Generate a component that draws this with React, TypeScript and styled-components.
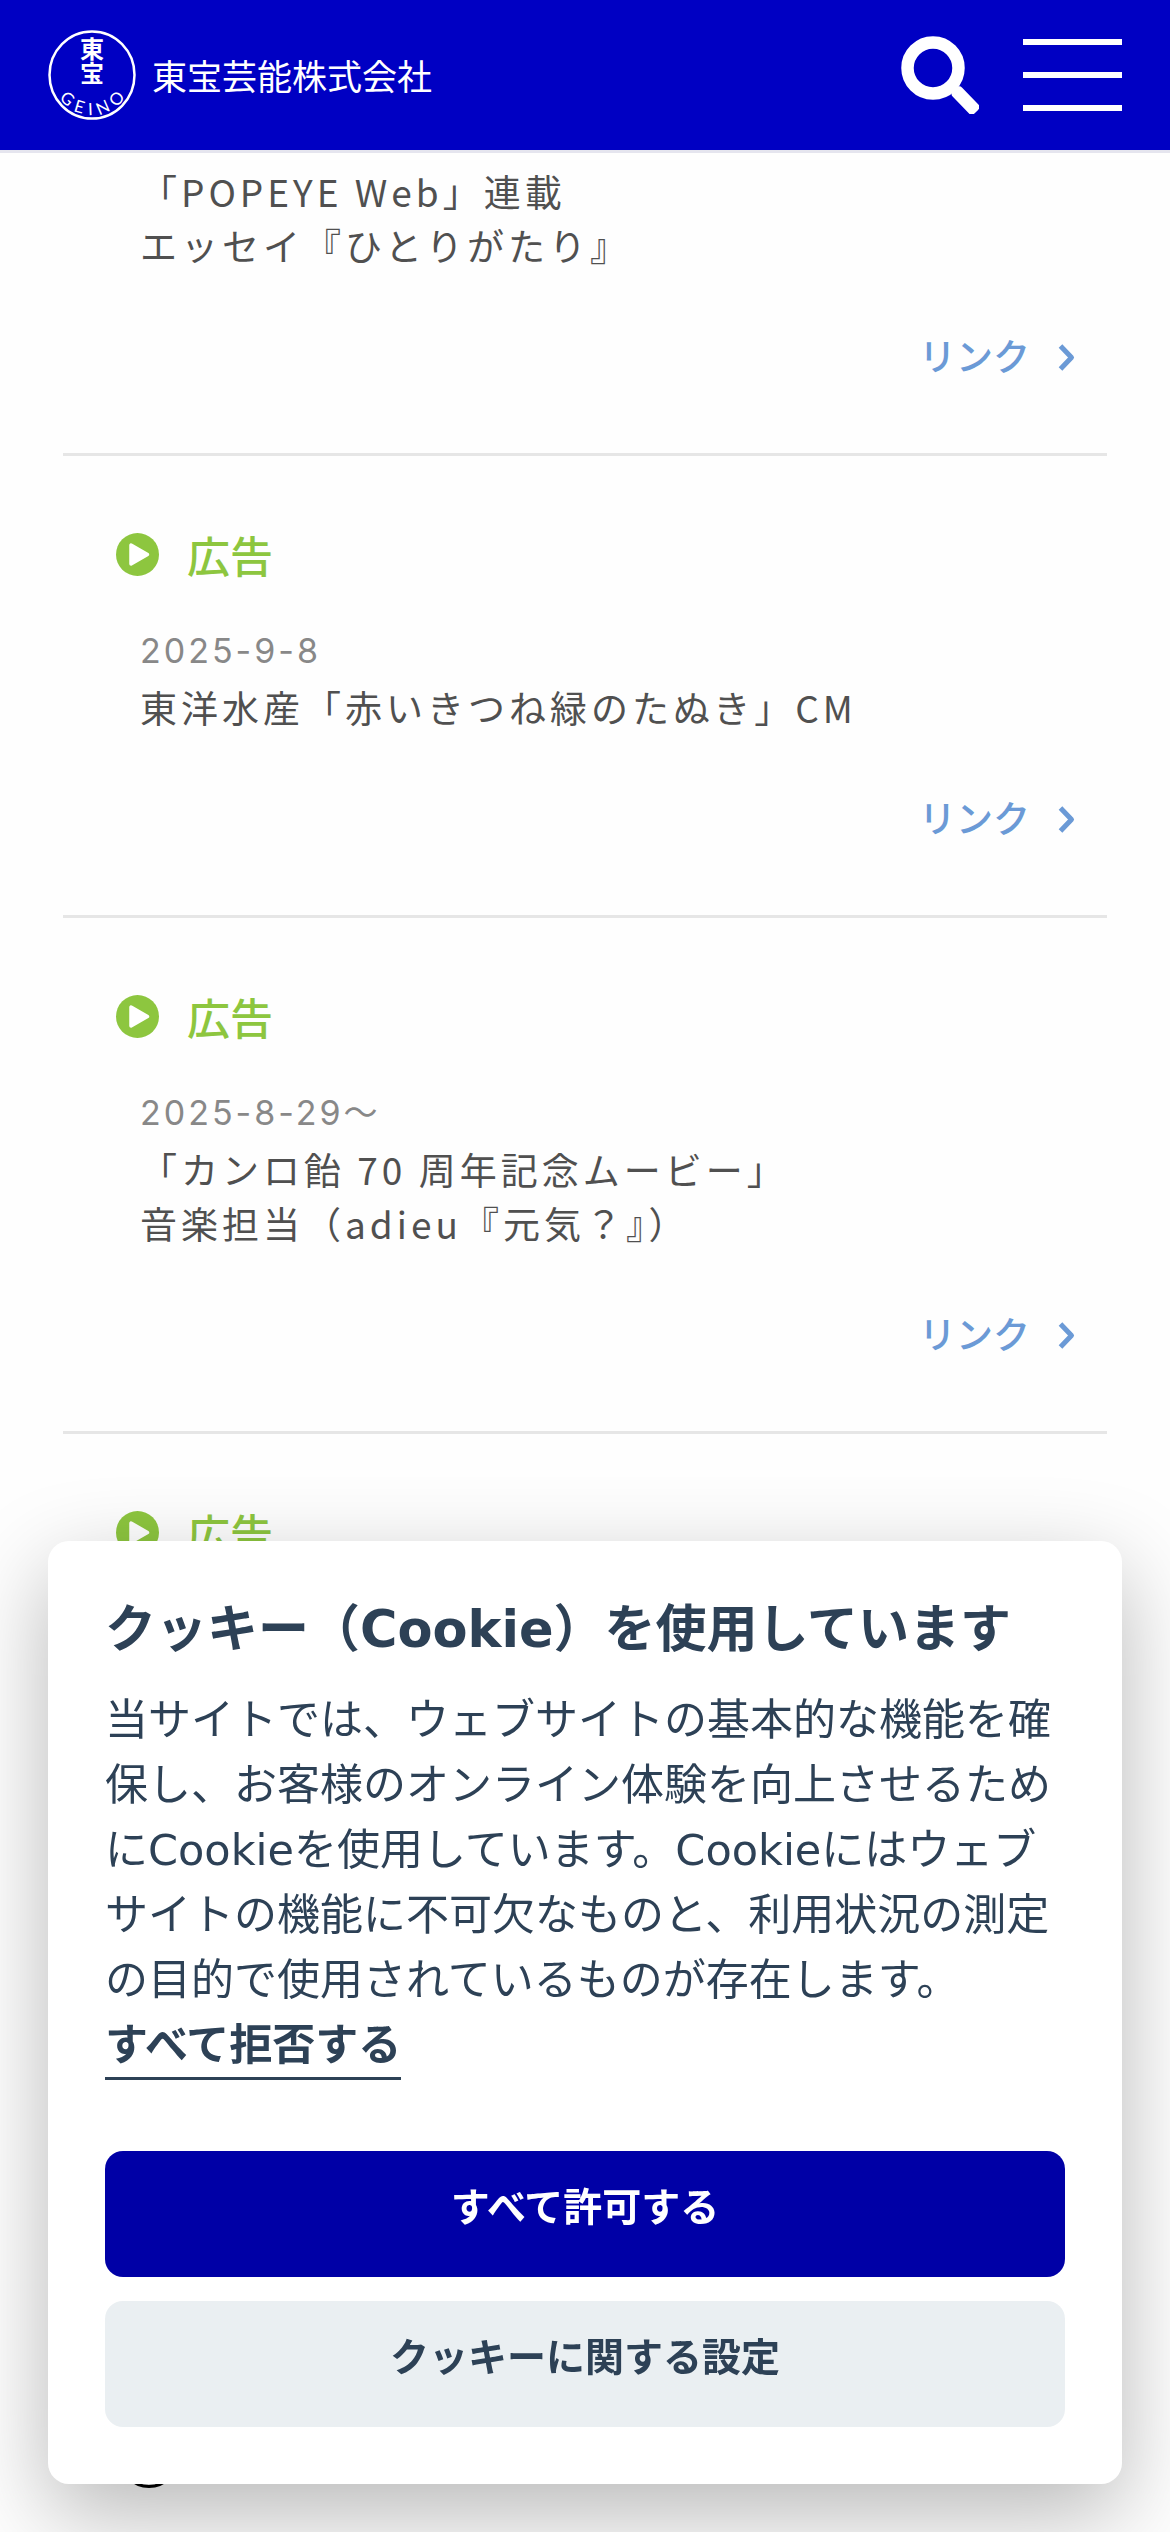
import React from "react";
import styled, { createGlobalStyle } from "styled-components";

const jpSans = `"Noto Sans CJK JP", "Noto Sans", sans-serif`;
const dialogSans = `"DejaVu Sans", "Noto Sans CJK JP", sans-serif`;

const GlobalStyle = createGlobalStyle`
  *, *::before, *::after { box-sizing: border-box; }
  body {
    margin: 0;
    background: #fefefe;
    color: #505050;
    font-family: ${jpSans};
  }
  h2, p, ul { margin: 0; padding: 0; }
  button { border: 0; padding: 0; background: none; cursor: pointer; }
`;

const Page = styled.div`
  display: flex;
  flex-direction: column;
  min-height: 100vh;
`;

const Header = styled.header`
  position: sticky;
  top: 0;
  display: flex;
  align-items: center;
  justify-content: space-between;
  padding: 29px 48px;
  background: #0000c3;
  border-bottom: 3px solid #e5e5ee;
`;

const Brand = styled.a`
  display: flex;
  align-items: center;
  gap: 16px;
  color: #fff;
  font-size: 35px;
  line-height: 54px;
  text-decoration: none;
`;

const HeaderTools = styled.div`
  display: flex;
  align-items: center;
  gap: 44px;
`;

const IconButton = styled.button`
  display: flex;
  color: #fff;
`;

const MenuButton = styled.button`
  display: flex;
  flex-direction: column;
  gap: 27px;
  width: 99px;
`;

const MenuBar = styled.span`
  height: 6px;
  background: #fff;
`;

const WorkList = styled.ul`
  margin: 0 63px;
  list-style: none;
`;

const WorkItem = styled.li`
  padding: 71px 32px 71px 77px;
  border-bottom: 3px solid #e6e6e6;

  &:first-child { padding-top: 11px; }
  &:last-child { border-bottom: 0; padding-bottom: 0; }
`;

const Category = styled.h2`
  display: flex;
  align-items: center;
  gap: 28px;
  margin-left: -24px;
  color: #8dc63f;
  font-size: 43px;
  font-weight: 500;
  line-height: 54px;
`;

const WorkDate = styled.p`
  margin-top: 43px;
  margin-bottom: 2px;
  color: #888;
  font-family: Inter, ${jpSans};
  font-size: 34px;
  font-weight: 400;
  letter-spacing: 3px;
  line-height: 54px;
`;

const WorkText = styled.p`
  font-size: 37px;
  letter-spacing: 4px;
  line-height: 54px;
`;

const LinkRow = styled.div`
  display: flex;
  justify-content: flex-end;
  margin-top: 56px;
`;

const WorkLink = styled.a`
  display: flex;
  align-items: center;
  gap: 28px;
  color: #6b9ad6;
  font-size: 37px;
  font-weight: 500;
  line-height: 54px;
  text-decoration: none;
`;

const PageFoot = styled.div`
  margin-top: auto;
  padding: 0 119px 44px;
  color: #000;

  svg { display: block; }
`;

const CookieDialog = styled.section`
  position: fixed;
  right: 48px;
  bottom: 48px;
  left: 48px;
  padding: 56px 57px 57px;
  border-radius: 21px;
  background: #fff;
  box-shadow: 0 30px 90px rgba(2, 2, 3, 0.28);
  color: #2d4156;
  font-family: ${dialogSans};
`;

const CookieTitle = styled.h2`
  font-size: 51px;
  font-weight: 700;
  line-height: 65px;
`;

const CookieText = styled.p`
  margin-top: 26px;
  font-size: 43px;
  line-height: 65px;
`;

const RejectButton = styled.button`
  display: block;
  border-bottom: 3px solid #2d4156;
  color: inherit;
  font-family: inherit;
  font-size: 43px;
  font-weight: 700;
  line-height: 64px;
`;

const CookieActions = styled.div`
  display: flex;
  flex-direction: column;
  gap: 24px;
  margin-top: 71px;
`;

const ActionButton = styled.button<{ $primary?: boolean }>`
  padding: 24px 24px 37px;
  border-radius: 18px;
  background: ${(p) => (p.$primary ? "#0000a6" : "#eaeff2")};
  color: ${(p) => (p.$primary ? "#fff" : "#2d4156")};
  font-family: inherit;
  font-size: 39px;
  font-weight: 700;
  line-height: 65px;
`;

const LogoMark = () => (
  <svg width="88" height="92" viewBox="0 0 88 92" fill="#fff" aria-hidden="true">
    <ellipse cx="44" cy="46" rx="42.5" ry="43.5" fill="none" stroke="#fff" strokeWidth="2.5" />
    <g fontFamily="Noto Sans CJK JP, sans-serif" fontSize="24" fontWeight="700" textAnchor="middle">
      <text x="44" y="29">東</text>
      <text x="44" y="53">宝</text>
    </g>
    <path id="logo-arc" d="M4 46 A40 40 0 0 0 84 46" fill="none" />
    <text fontFamily="Lato, sans-serif" fontSize="17" letterSpacing="6" textAnchor="middle">
      <textPath href="#logo-arc" startOffset="53%">GEINO</textPath>
    </text>
  </svg>
);

const SearchIcon = () => (
  <svg width="78" height="78" viewBox="0 0 78 78" aria-hidden="true">
    <circle cx="32" cy="32" r="25.5" fill="none" stroke="currentColor" strokeWidth="12.5" />
    <rect x="49" y="58" width="31" height="13" rx="4" fill="currentColor" transform="rotate(46 64.5 64.5)" />
  </svg>
);

const PlayIcon = () => (
  <svg width="43" height="43" viewBox="0 0 43 43" aria-hidden="true">
    <circle cx="21.5" cy="21.5" r="21.5" fill="currentColor" />
    <path
      d="M15 12v19l16.500-9.500z"
      fill="#fff"
      stroke="#fff"
      strokeWidth="3.500"
      strokeLinejoin="round"
    />
  </svg>
);

const ChevronIcon = () => (
  <svg width="17" height="32" viewBox="0 0 17 32" aria-hidden="true">
    <path
      d="M2.5 7 13.5 18.5 2.5 30"
      fill="none"
      stroke="currentColor"
      strokeWidth="5"
      strokeLinejoin="round"
    />
  </svg>
);

type Work = { category?: string; date?: string; lines: string[] };

const works: Work[] = [
  { lines: ["「POPEYE Web」連載", "エッセイ『ひとりがたり』"] },
  { category: "広告", date: "2025-9-8", lines: ["東洋水産「赤いきつね緑のたぬき」CM"] },
  {
    category: "広告",
    date: "2025-8-29～",
    lines: ["「カンロ飴 70 周年記念ムービー」", "音楽担当（adieu『元気？』）"],
  },
  { category: "広告", lines: [] },
];

export default function App() {
  return (
    <Page lang="ja">
      <GlobalStyle />
      <Header>
        <Brand href="#">
          <LogoMark />
          東宝芸能株式会社
        </Brand>
        <HeaderTools>
          <IconButton type="button" aria-label="検索">
            <SearchIcon />
          </IconButton>
          <MenuButton type="button" aria-label="メニュー">
            <MenuBar />
            <MenuBar />
            <MenuBar />
          </MenuButton>
        </HeaderTools>
      </Header>

      <WorkList>
        {works.map((work, i) => (
          <WorkItem key={i}>
            {work.category && (
              <Category>
                <PlayIcon />
                {work.category}
              </Category>
            )}
            {work.date && <WorkDate>{work.date}</WorkDate>}
            {work.lines.map((line) => (
              <WorkText key={line}>{line}</WorkText>
            ))}
            {work.lines.length > 0 && (
              <LinkRow>
                <WorkLink href="#">
                  リンク
                  <ChevronIcon />
                </WorkLink>
              </LinkRow>
            )}
          </WorkItem>
        ))}
      </WorkList>

      <PageFoot>
        <svg width="60" height="60" viewBox="0 0 60 60" aria-hidden="true">
          <circle cx="30" cy="30" r="28.5" fill="none" stroke="currentColor" strokeWidth="3" />
        </svg>
      </PageFoot>

      <CookieDialog role="dialog" aria-labelledby="cookie-title">
        <CookieTitle id="cookie-title">クッキー（Cookie）を使用しています</CookieTitle>
        <CookieText>
          当サイトでは、ウェブサイトの基本的な機能を確保し、お客様のオンライン体験を向上させるためにCookieを使用しています。Cookieにはウェブサイトの機能に不可欠なものと、利用状況の測定の目的で使用されているものが存在します。
        </CookieText>
        <RejectButton type="button">すべて拒否する</RejectButton>
        <CookieActions>
          <ActionButton type="button" $primary>
            すべて許可する
          </ActionButton>
          <ActionButton type="button">クッキーに関する設定</ActionButton>
        </CookieActions>
      </CookieDialog>
    </Page>
  );
}
